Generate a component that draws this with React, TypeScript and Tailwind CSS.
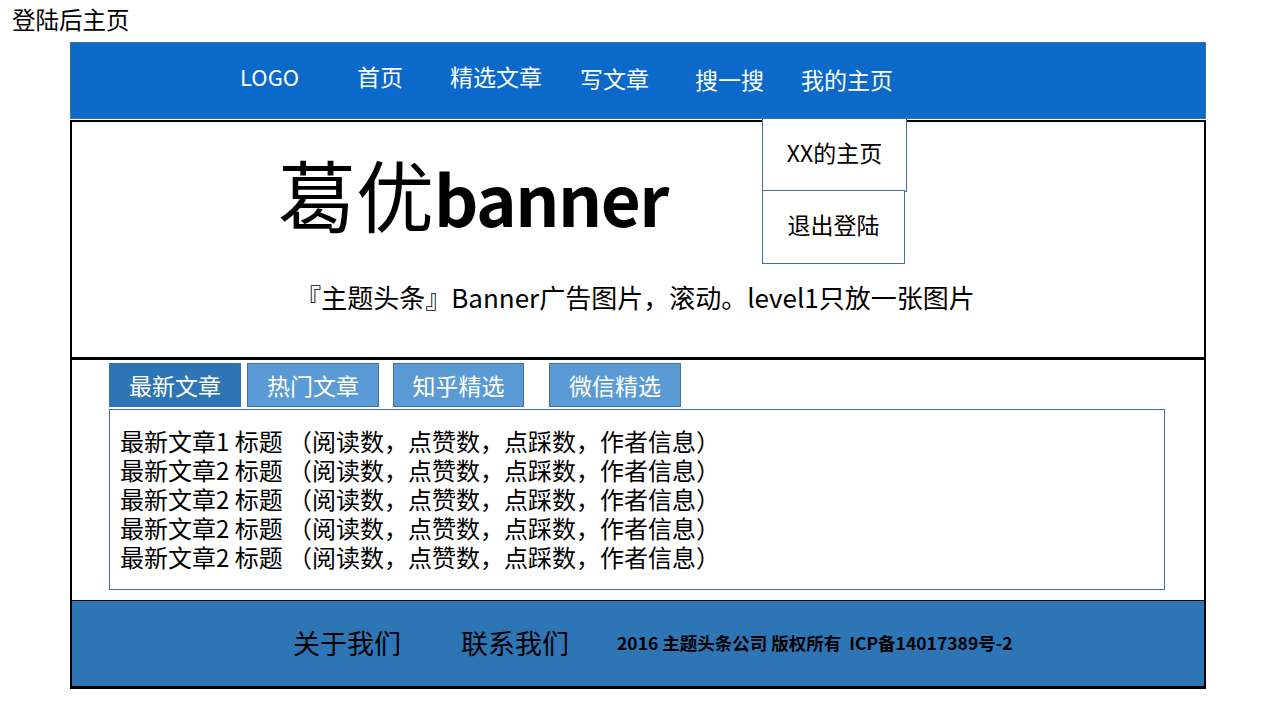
export default function App() {
  const rows = ["最新文章1", "最新文章2", "最新文章2", "最新文章2", "最新文章2"];
  return (
    <div className="relative w-[1280px] h-[720px] bg-white text-black font-['Noto_Sans_CJK_SC',sans-serif]">
      <div className="h-[42px] pl-[12px] pt-[4px] text-[23.5px] leading-[30px]">登陆后主页</div>
      <div className="ml-[70px] w-[1136px]">
        <nav className="h-[77px] bg-[#0a69c9] border border-[#41719c] flex items-center pl-[169px] pb-[9px] text-white text-[23px]">
          <div className="w-[117px] text-[22px]">LOGO</div>
          <div className="w-[93px]">首页</div>
          <div className="w-[130px]">精选文章</div>
          <div className="w-[115px] pt-[4px]">写文章</div>
          <div className="w-[106px] pt-[6px]">搜一搜</div>
          <div className="pt-[6px]">我的主页</div>
        </nav>
        <section className="mt-[1px] h-[240px] border-2 border-b-[3px] border-black flex flex-col">
          <div className="mt-[31px] h-[80px] leading-[80px] pl-[206px] whitespace-nowrap">
            <span className="text-[78px]">葛优</span>
            <span className="text-[69px] font-bold tracking-[-1.5px]">banner</span>
          </div>
          <div className="mt-[47px] text-center text-[26px] leading-[34px] pr-[6px]">
            『主题头条』Banner广告图片，滚动。level1只放一张图片
          </div>
        </section>
        <section className="h-[240px] border-x-2 border-black pl-[37px] pt-[3px]">
          <div className="flex h-[44px] text-white text-[23px]">
            <div className="w-[132px] bg-[#2e75b6] flex items-center justify-center">最新文章</div>
            <div className="ml-[6px] w-[132px] bg-[#5b9bd5] border border-[#41719c] flex items-center justify-center">热门文章</div>
            <div className="ml-[14px] w-[131px] bg-[#5b9bd5] border border-[#41719c] flex items-center justify-center">知乎精选</div>
            <div className="ml-[25px] w-[132px] bg-[#5b9bd5] border border-[#41719c] flex items-center justify-center">微信精选</div>
          </div>
          <div className="mt-[2px] w-[1056px] h-[181px] border border-[#41719c] pl-[10px] pt-[16px] text-[24px] leading-[29px]">
            {rows.map((r, i) => (
              <div key={i} className="whitespace-pre">{r + " 标题 （阅读数，点赞数，点踩数，作者信息）"}</div>
            ))}
          </div>
        </section>
        <footer className="h-[89px] bg-[#2e75b6] border-t border-x-2 border-b-[3px] border-black flex items-center pl-[221px]">
          <div className="w-[168px] text-[27px]">关于我们</div>
          <div className="w-[156px] text-[27px]">联系我们</div>
          <div className="text-[17.5px] font-bold whitespace-pre">2016 主题头条公司 版权所有  ICP备14017389号-2</div>
        </footer>
      </div>
      <div className="absolute left-[762px] top-[118px] w-[145px] h-[74px] bg-white border border-[#41719c] flex items-center justify-center pb-[5px] text-[23px]">
        XX的主页
      </div>
      <div className="absolute left-[762px] top-[190px] w-[143px] h-[74px] bg-white border border-[#41719c] flex items-center justify-center pb-[5px] text-[23px]">
        退出登陆
      </div>
    </div>
  );
}
